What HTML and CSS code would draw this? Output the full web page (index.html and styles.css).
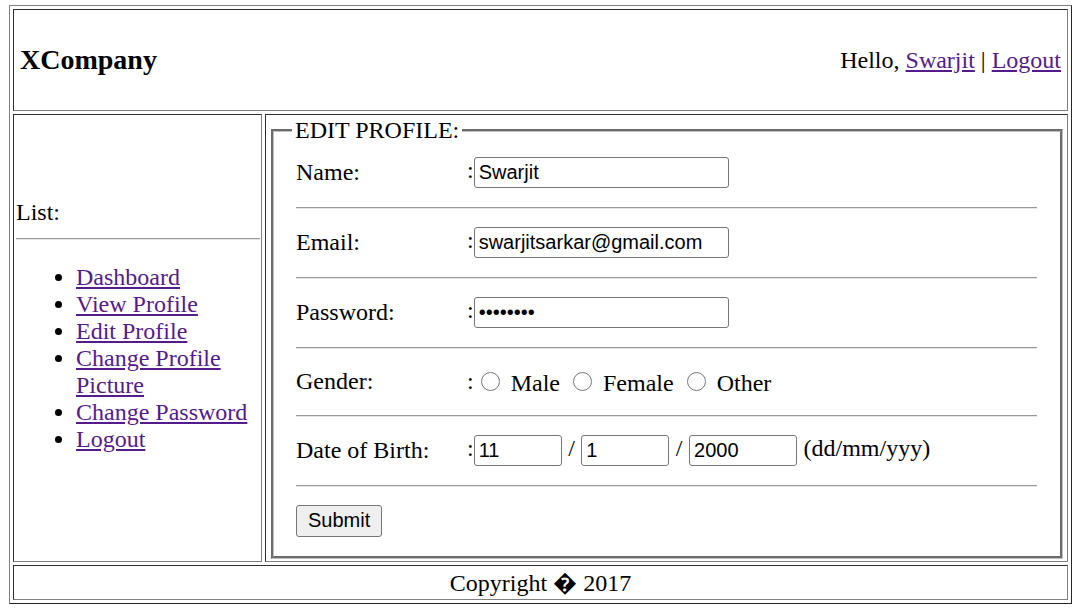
FILE: index.html
```html
<!DOCTYPE html>
<html>
<head>
<meta charset="utf-8">
<title>Edit Profile</title>
<link rel="stylesheet" href="styles.css">
</head>
<body>
<div class="page">
  <div class="cell head">
    <h3 class="brand">XCompany</h3>
    <div class="greet">Hello, <a href="#">Swarjit</a> | <a href="#">Logout</a></div>
  </div>
  <div class="middle">
    <div class="cell side">
      <div class="side-inner">
        List:
        <hr class="side-hr">
        <ul class="menu">
          <li><a href="#">Dashboard</a></li>
          <li><a href="#">View Profile</a></li>
          <li><a href="#">Edit Profile</a></li>
          <li><a href="#">Change Profile Picture</a></li>
          <li><a href="#">Change Password</a></li>
          <li><a href="#">Logout</a></li>
        </ul>
      </div>
    </div>
    <div class="cell content">
      <fieldset class="box">
        <legend class="box-title">EDIT PROFILE:</legend>
        <div class="form">
          <div class="frow"><span class="lbl">Name:</span><span class="val">:<input class="txt" type="text" value="Swarjit"></span></div>
          <div class="sep"><hr class="line"></div>
          <div class="frow"><span class="lbl">Email:</span><span class="val">:<input class="txt" type="text" value="swarjitsarkar@gmail.com"></span></div>
          <div class="sep"><hr class="line"></div>
          <div class="frow"><span class="lbl">Password:</span><span class="val">:<input class="txt" type="password" value="12345678"></span></div>
          <div class="sep"><hr class="line"></div>
          <div class="frow short"><span class="lbl">Gender:</span><span class="radios"><span>:</span><input class="radio r1" type="radio" name="g"><span class="rtxt">Male</span><input class="radio r2" type="radio" name="g"><span class="rtxt">Female</span><input class="radio r2" type="radio" name="g"><span class="rtxt">Other</span></span></div>
          <div class="sep"><hr class="line"></div>
          <div class="frow"><span class="lbl">Date of Birth:</span><span class="val">:<input class="txt dd" type="text" value="11"> / <input class="txt dd" type="text" value="1"> / <input class="txt yy" type="text" value="2000"> (dd/mm/yyy)</span></div>
          <div class="sep"><hr class="line"></div>
          <div class="frow"><button class="submit" type="button">Submit</button></div>
        </div>
      </fieldset>
    </div>
  </div>
  <div class="cell foot">Copyright &#xFFFD; 2017</div>
</div>
</body>
</html>
```
FILE: styles.css
```css
html, body {
  background: #fff;
}
body {
  margin: 5px 9px;
  font-family: "Liberation Serif", "Times New Roman", serif;
  font-size: 24px;
  line-height: 27px;
  color: #000;
}
a {
  color: #551a8b;
}
.page {
  box-sizing: border-box;
  height: 599px;
  border: 1px solid;
  border-color: #808080 #262626 #262626 #808080;
  padding: 3px;
  display: flex;
  flex-direction: column;
  gap: 3px;
}
.cell {
  box-sizing: border-box;
  border: 1px solid;
  border-color: #2e2e2e #808080 #808080 #2e2e2e;
}
.head {
  height: 102px;
  display: flex;
  align-items: center;
  justify-content: space-between;
  padding: 0 6px 0 6px;
}
.brand {
  margin: 0;
  font-size: 28px;
  font-weight: bold;
  line-height: 32px;
}
.greet {
  white-space: nowrap;
}
.middle {
  display: grid;
  grid-template-columns: 249px 803px;
  gap: 3px;
}
.side {
  display: flex;
  flex-direction: column;
  justify-content: center;
  padding: 0 1px 0 2px;
}
.side-hr {
  margin: 12px 0;
  height: 0;
  border: 0;
  border-top: 1px solid #9a9a9a;
  border-bottom: 1px solid #e6e6e6;
}
.menu {
  margin: 24px 0;
  padding-left: 60px;
}
.content {
  padding: 2px 4px 2px 5px;
}
.box {
  margin: 0;
  padding: 8px 18px 15px;
  border: 3px groove #c0c0c0;
  min-width: 0;
}
.box-title {
  padding: 0 3px;
}
.form {
  display: flex;
  flex-direction: column;
  gap: 3px;
  padding: 3px 0;
  margin-left: 4px;
  width: 741px;
}
.frow {
  height: 35px;
  display: flex;
  align-items: center;
}
.frow.short {
  height: 33px;
}
.lbl {
  width: 171px;
  flex: none;
}
.val {
  display: block;
  white-space: nowrap;
  word-spacing: 0.5px;
}
.txt {
  box-sizing: border-box;
  width: 255px;
  height: 31px;
  margin: 0;
  padding: 0 4px;
  border: 1px solid #767676;
  border-radius: 3px;
  font-family: "Liberation Sans", Arial, sans-serif;
  font-size: 20px;
  word-spacing: 0;
  color: #000;
  background: #fff;
  vertical-align: middle;
}
.txt.dd {
  width: 88px;
}
.txt.yy {
  width: 108px;
}
.sep {
  box-sizing: border-box;
  height: 29px;
  padding-top: 14px;
}
.line {
  margin: 0;
  height: 0;
  border: 0;
  border-top: 1px solid #9a9a9a;
  border-bottom: 1px solid #e6e6e6;
}
.radios {
  display: flex;
  align-items: center;
}
.radio {
  appearance: none;
  -webkit-appearance: none;
  box-sizing: border-box;
  width: 19px;
  height: 19px;
  margin: 0;
  border: 1.5px solid #767676;
  border-radius: 50%;
  background: #fff;
}
.r1 {
  margin-left: 7px;
}
.r2 {
  margin-left: 13px;
}
.rtxt {
  margin-left: 11px;
  margin-top: 3px;
}
.submit {
  box-sizing: border-box;
  height: 32px;
  margin: 0;
  padding: 0 11px;
  border: 1px solid #767676;
  border-radius: 3px;
  background: #efefef;
  font-family: "Liberation Sans", Arial, sans-serif;
  font-size: 20px;
  color: #000;
}
.foot {
  height: 35px;
  display: flex;
  align-items: center;
  justify-content: center;
  padding-top: 1px;
}
```
